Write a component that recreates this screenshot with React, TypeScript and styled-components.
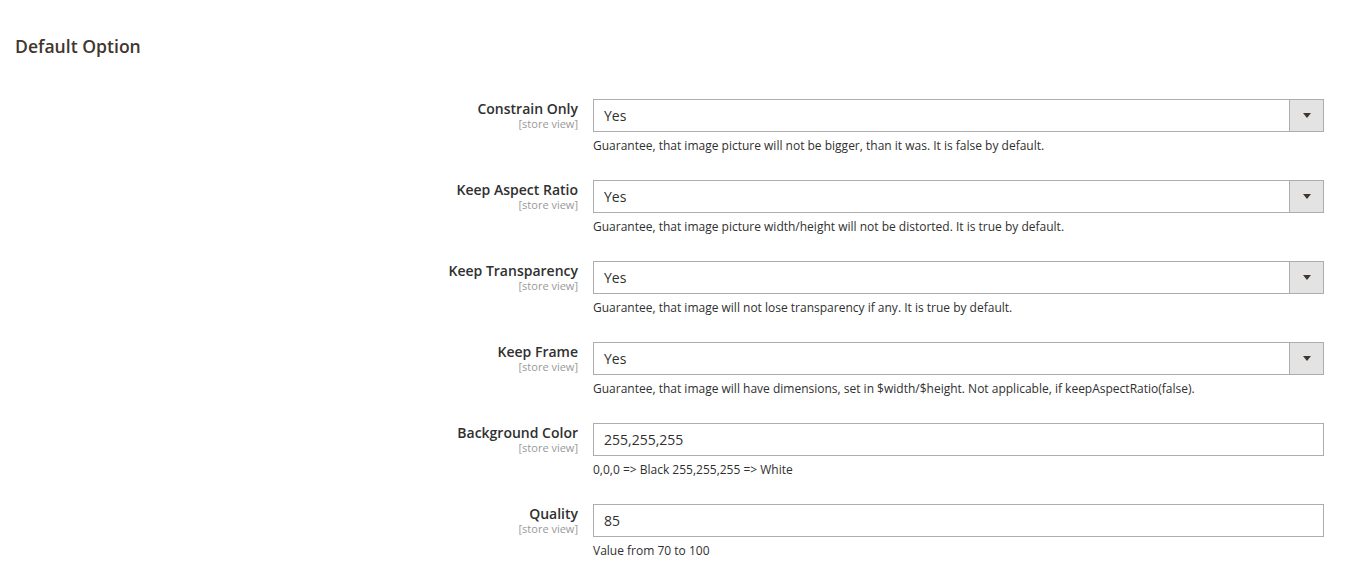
import React from 'react'
import styled, { createGlobalStyle } from 'styled-components'

const GlobalStyle = createGlobalStyle`
  body {
    margin: 0;
    background: #fff;
    font-family: 'Open Sans', 'Liberation Sans', sans-serif;
    color: #303030;
  }
`

const Page = styled.div`
  padding: 34px 0 0 15px;
  width: 1335px;
`

const Legend = styled.h2`
  margin: 0 0 41px;
  font-size: 17.6px;
  line-height: 24px;
  font-weight: 600;
  color: #41362f;
`

const Fieldset = styled.div`
  display: flex;
  flex-direction: column;
  gap: 26px;
`

const Row = styled.div`
  display: grid;
  grid-template-columns: 563px 731px;
  column-gap: 15px;
`

const LabelBox = styled.div`
  display: flex;
  flex-direction: column;
  align-items: flex-end;
  text-align: right;
`

const Label = styled.span`
  font-size: 14px;
  line-height: 19px;
  font-weight: 600;
  color: #303030;
`

const Scope = styled.span`
  font-size: 11px;
  line-height: 12px;
  color: #999;
`

const Control = styled.div`
  display: flex;
  flex-direction: column;
`

const Box = styled.div`
  position: relative;
  height: 33px;
  box-sizing: border-box;
  border: 1px solid #adadad;
  background: #fff;
  display: flex;
  align-items: center;
  padding-left: 10px;
  font-size: 14px;
  color: #303030;
`

const ArrowButton = styled.span`
  position: absolute;
  top: 0;
  right: 0;
  bottom: 0;
  width: 33px;
  background: #e3e3e3;
  border-left: 1px solid #adadad;
  display: flex;
  align-items: center;
  justify-content: center;

  &::after {
    content: '';
    border-left: 4px solid transparent;
    border-right: 4px solid transparent;
    border-top: 5px solid #41362f;
  }
`

const Note = styled.div`
  margin-top: 5px;
  font-size: 12px;
  line-height: 17px;
  color: #303030;
`

type Field = {
  label: string
  value: string
  note: string
  select?: boolean
}

const fields: Field[] = [
  {
    label: 'Constrain Only',
    value: 'Yes',
    select: true,
    note: 'Guarantee, that image picture will not be bigger, than it was. It is false by default.',
  },
  {
    label: 'Keep Aspect Ratio',
    value: 'Yes',
    select: true,
    note: 'Guarantee, that image picture width/height will not be distorted. It is true by default.',
  },
  {
    label: 'Keep Transparency',
    value: 'Yes',
    select: true,
    note: 'Guarantee, that image will not lose transparency if any. It is true by default.',
  },
  {
    label: 'Keep Frame',
    value: 'Yes',
    select: true,
    note: 'Guarantee, that image will have dimensions, set in $width/$height. Not applicable, if keepAspectRatio(false).',
  },
  {
    label: 'Background Color',
    value: '255,255,255',
    note: '0,0,0 => Black 255,255,255 => White',
  },
  {
    label: 'Quality',
    value: '85',
    note: 'Value from 70 to 100',
  },
]

export default function App() {
  return (
    <>
      <GlobalStyle />
      <Page>
        <Legend>Default Option</Legend>
        <Fieldset>
          {fields.map(field => (
            <Row key={field.label}>
              <LabelBox>
                <Label>{field.label}</Label>
                <Scope>[store view]</Scope>
              </LabelBox>
              <Control>
                <Box>
                  {field.value}
                  {field.select && <ArrowButton />}
                </Box>
                <Note>{field.note}</Note>
              </Control>
            </Row>
          ))}
        </Fieldset>
      </Page>
    </>
  )
}
